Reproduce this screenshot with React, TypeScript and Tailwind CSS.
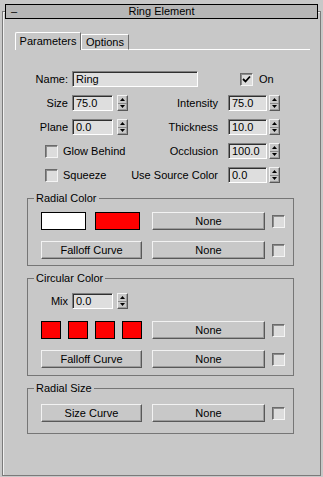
import React from 'react';

const sunken =
  'border border-t-[#808080] border-l-[#808080] border-b-white border-r-white shadow-[inset_1px_1px_0_#303030]';
const raised =
  'border border-t-[#f2f2f2] border-l-[#f2f2f2] border-b-[#585858] border-r-[#585858] shadow-[inset_-1px_-1px_0_#9c9c9c]';

function Field({ value, w, className = '' }: { value: string; w: string; className?: string }) {
  return (
    <div className={`h-[16px] ${w} bg-[#dedede] pl-[3px] leading-[14px] ${sunken} ${className}`}>{value}</div>
  );
}

function Spinner({ className = '' }: { className?: string }) {
  return (
    <div className={`flex h-[16px] w-[11px] flex-col ${raised} ${className}`}>
      <div className="flex flex-1 items-center justify-center border-b border-[#8a8a8a]">
        <svg width="5" height="3" viewBox="0 0 5 3">
          <path d="M2.5 0 L5 3 L0 3 Z" fill="#000" />
        </svg>
      </div>
      <div className="flex flex-1 items-center justify-center">
        <svg width="5" height="3" viewBox="0 0 5 3">
          <path d="M0 0 L5 0 L2.5 3 Z" fill="#000" />
        </svg>
      </div>
    </div>
  );
}

function Check({ checked = false, className = '' }: { checked?: boolean; className?: string }) {
  return (
    <div
      className={`flex h-[13px] w-[13px] shrink-0 items-center justify-center bg-[#dcdcdc] border border-t-[#6a6a6a] border-l-[#6a6a6a] border-b-[#f4f4f4] border-r-[#f4f4f4] shadow-[inset_1px_1px_0_#8c8c8c] ${className}`}
    >
      {checked && (
        <svg width="9" height="9" viewBox="0 0 9 9">
          <path d="M1 4 L3.5 6.5 L8 1.5" stroke="#000" strokeWidth="1.8" fill="none" />
        </svg>
      )}
    </div>
  );
}

function Button({ label, w, className = '' }: { label: string; w: string; className?: string }) {
  return (
    <div className={`flex h-[18px] ${w} items-center justify-center bg-[#c8c8c8] ${raised} ${className}`}>
      {label}
    </div>
  );
}

function SpinRow({
  left,
  leftValue,
  right,
  rightValue,
  className = '',
}: {
  left: string;
  leftValue: string;
  right: string;
  rightValue: string;
  className?: string;
}) {
  return (
    <div className={`flex h-[16px] items-center ${className}`}>
      <div className="w-[65px] text-right">{left}</div>
      <Field value={leftValue} w="w-[41px]" className="ml-[4px]" />
      <Spinner className="ml-[4px]" />
      <div className="w-[90px] text-right">{right}</div>
      <Field value={rightValue} w="w-[39px]" className="ml-[10px]" />
      <Spinner className="ml-[2px]" />
    </div>
  );
}

function CheckRow({
  label,
  right,
  rightValue,
  className = '',
}: {
  label: string;
  right: string;
  rightValue: string;
  className?: string;
}) {
  return (
    <div className={`flex h-[16px] items-center ${className}`}>
      <div className="flex w-[125px] items-center">
        <Check className="ml-[42px]" />
        <span className="ml-[5px]">{label}</span>
      </div>
      <div className="w-[90px] text-right">{right}</div>
      <Field value={rightValue} w="w-[39px]" className="ml-[10px]" />
      <Spinner className="ml-[2px]" />
    </div>
  );
}

export default function App() {
  return (
    <div className="relative h-[477px] w-[323px] overflow-hidden bg-[#c8c8c8] text-[11px] leading-[13px] text-black [font-family:'Liberation_Sans',Arial,sans-serif]">
      {/* rollout title bar sits over the frame */}
      <div className="absolute left-[5px] top-[4px] z-10 flex h-[15px] w-[313px] items-center border border-black bg-[#b6b6b6]">
        <span className="w-[20px] pl-[5px]">–</span>
        <span className="flex-1 text-center">Ring Element</span>
        <span className="w-[20px]" />
      </div>

      <div className="ml-[2px] mt-[11px] h-[465px] w-[319px] border border-[#7a7a7a] shadow-[inset_1px_1px_0_#f0f0f0]">
        {/* tabs */}
        <div className="ml-[12px] mt-[20px] flex h-[18px] w-[295px] items-end">
          <div className="flex h-[18px] w-[66px] items-center justify-center rounded-tl-[2px] border-l border-r border-t border-l-white border-r-[#6e6e6e] border-t-white">
            Parameters
          </div>
          <div className="flex h-[16px] w-[48px] items-center justify-center border border-b-white border-l-white border-r-[#6e6e6e] border-t-white">
            Options
          </div>
          <div className="h-full flex-1 border-b border-white" />
        </div>

        {/* name */}
        <div className="mt-[21px] flex h-[16px] items-center">
          <div className="w-[65px] text-right">Name:</div>
          <Field value="Ring" w="w-[126px]" className="ml-[4px]" />
          <Check checked className="ml-[42px]" />
          <span className="ml-[6px]">On</span>
        </div>

        <SpinRow className="mt-[8px]" left="Size" leftValue="75.0" right="Intensity" rightValue="75.0" />
        <SpinRow className="mt-[8px]" left="Plane" leftValue="0.0" right="Thickness" rightValue="10.0" />
        <CheckRow className="mt-[8px]" label="Glow Behind" right="Occlusion" rightValue="100.0" />
        <CheckRow className="mt-[8px]" label="Squeeze" right="Use Source Color" rightValue="0.0" />

        {/* Radial Color */}
        <fieldset className="ml-[24px] mt-[9px] w-[267px] border border-[#767676] pb-[6px] pl-[13px]">
          <legend className="ml-[-7px] px-[2px] leading-[13px]">Radial Color</legend>
          <div className="mt-[7px] flex h-[18px] items-center">
            <div className="h-[18px] w-[45px] border border-black bg-white" />
            <div className="ml-[9px] h-[18px] w-[45px] border border-black bg-[#ff0000]" />
            <Button label="None" w="w-[113px]" className="ml-[12px]" />
            <Check className="ml-[7px]" />
          </div>
          <div className="mt-[11px] flex h-[18px] items-center">
            <Button label="Falloff Curve" w="w-[101px]" />
            <Button label="None" w="w-[113px]" className="ml-[10px]" />
            <Check className="ml-[7px]" />
          </div>
        </fieldset>

        {/* Circular Color */}
        <fieldset className="ml-[24px] mt-[6px] w-[267px] border border-[#767676] pb-[7px] pl-[13px]">
          <legend className="ml-[-7px] px-[2px] leading-[13px]">Circular Color</legend>
          <div className="mt-[8px] flex h-[16px] items-center">
            <div className="w-[27px] text-right">Mix</div>
            <Field value="0.0" w="w-[41px]" className="ml-[4px]" />
            <Spinner className="ml-[4px]" />
          </div>
          <div className="mt-[12px] flex h-[18px] items-center gap-[7px]">
            <div className="h-[18px] w-[20px] border border-black bg-[#ff0000]" />
            <div className="h-[18px] w-[20px] border border-black bg-[#ff0000]" />
            <div className="h-[18px] w-[20px] border border-black bg-[#ff0000]" />
            <div className="h-[18px] w-[20px] border border-black bg-[#ff0000]" />
            <Button label="None" w="w-[113px]" className="ml-[3px]" />
            <Check />
          </div>
          <div className="mt-[11px] flex h-[18px] items-center">
            <Button label="Falloff Curve" w="w-[101px]" />
            <Button label="None" w="w-[113px]" className="ml-[10px]" />
            <Check className="ml-[7px]" />
          </div>
        </fieldset>

        {/* Radial Size */}
        <fieldset className="ml-[24px] mt-[6px] w-[267px] border border-[#767676] pb-[11px] pl-[13px]">
          <legend className="ml-[-7px] px-[2px] leading-[13px]">Radial Size</legend>
          <div className="mt-[9px] flex h-[18px] items-center">
            <Button label="Size Curve" w="w-[101px]" />
            <Button label="None" w="w-[113px]" className="ml-[10px]" />
            <Check className="ml-[7px]" />
          </div>
        </fieldset>
      </div>
    </div>
  );
}
